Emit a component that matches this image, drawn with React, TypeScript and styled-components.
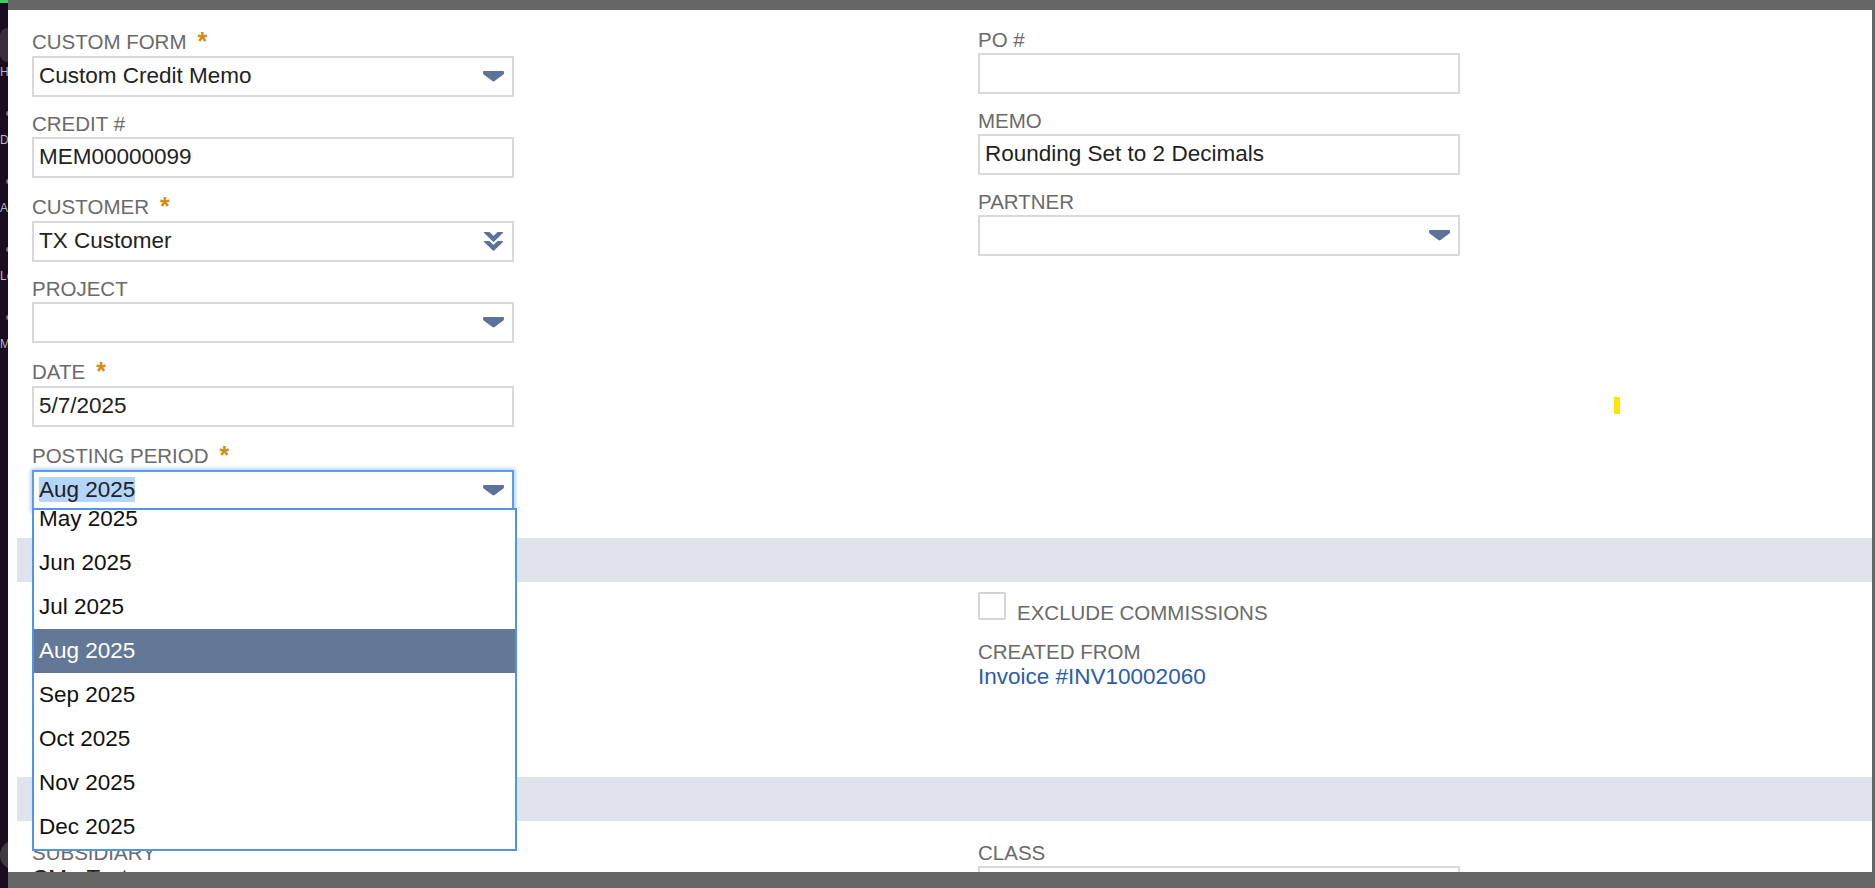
import React, { useLayoutEffect, useRef } from "react";
import styled, { createGlobalStyle } from "styled-components";

const GlobalStyle = createGlobalStyle`
  *, *::before, *::after { box-sizing: border-box; }
  html, body { margin: 0; padding: 0; }
  body {
    width: 1875px;
    height: 888px;
    overflow: hidden;
    background: #666;
    font-family: "Liberation Sans", Arial, Helvetica, sans-serif;
  }
`;

const Screen = styled.div`
  display: flex;
  width: 1875px;
  height: 888px;
`;

/* ---- app navigation rail, mostly covered by the record window ---- */
const Rail = styled.nav`
  width: 8px;
  flex: none;
  display: flex;
  flex-direction: column;
  overflow: hidden;
  background: #1c0c1f;
`;

const RailAccent = styled.div`
  height: 3px;
  flex: none;
  background: #3fcf5c;
`;

const RailList = styled.div`
  width: 8px;
  display: flex;
  flex-direction: column;
  padding-top: 25px;
`;

const RailItem = styled.div`
  height: 68px;
  display: flex;
  flex-direction: column;
`;

const RailIcon = styled.div<{ $active?: boolean }>`
  width: 34px;
  height: 34px;
  border-radius: 8px;
  display: flex;
  align-items: center;
  padding-left: 6px;
  background: ${(p) => (p.$active ? "#3a2d3d" : "transparent")};
`;

const RailDot = styled.span`
  width: 5px;
  height: 5px;
  border-radius: 50%;
  background: #7a737b;
`;

const RailText = styled.span`
  margin-top: 3px;
  width: 8px;
  overflow: hidden;
  font-size: 12px;
  line-height: 14px;
  color: #bdb6be;
  white-space: nowrap;
`;

const RailAvatar = styled.div`
  margin-top: auto;
  margin-bottom: 18px;
  width: 30px;
  height: 30px;
  flex: none;
  border-radius: 50%;
  background: #3f3a40;
`;

/* ---- record window ---- */
const Frame = styled.div`
  flex: 1;
  min-width: 0;
  display: flex;
  flex-direction: column;
  padding: 10px 3px 16px 0;
  background: #666;
`;

const Panel = styled.main`
  position: relative;
  flex: 1;
  display: flex;
  flex-direction: column;
  overflow: hidden;
  padding-left: 9px;
  background: #fff;
`;

const Section = styled.section<{ $pt: number; $pb?: number; $minH?: number }>`
  flex: none;
  display: grid;
  grid-template-columns: 946px 482px;
  align-items: start;
  padding: ${(p) => p.$pt}px 0 ${(p) => p.$pb ?? 0}px 15px;
  min-height: ${(p) => (p.$minH ? `${p.$minH}px` : "0")};
`;

const Band = styled.div`
  height: 44px;
  flex: none;
  background: #dfe4ec;
`;

const Column = styled.div`
  width: 482px;
  display: flex;
  flex-direction: column;
  gap: 15px;
`;

const Field = styled.div`
  display: flex;
  flex-direction: column;
`;

const Label = styled.div<{ $req?: boolean }>`
  display: flex;
  align-items: flex-start;
  padding-top: ${(p) => (p.$req ? 2 : 0)}px;
  margin-bottom: ${(p) => (p.$req ? 2 : 1)}px;
  font-size: 20.5px;
  line-height: 24px;
  color: #6a6a6a;
  white-space: nowrap;
`;

const Req = styled.span`
  margin-left: 11px;
  font-size: 25px;
  line-height: 22px;
  font-weight: bold;
  color: #d68a10;
`;

const InputWrap = styled.div`
  position: relative;
`;

const InputBox = styled.div<{ $focused?: boolean }>`
  height: 41px;
  display: flex;
  align-items: center;
  padding: 0 8px 1px 5px;
  background: #fff;
  border: 2px solid ${(p) => (p.$focused ? "#5c9cf0" : "#d9d9d9")};
  box-shadow: ${(p) => (p.$focused ? "0 0 4px 1px rgba(84, 150, 240, 0.55)" : "none")};
  font-size: 22.5px;
  color: #222;
`;

const Value = styled.span`
  flex: 1;
  min-width: 0;
  overflow: hidden;
  white-space: nowrap;
`;

const Highlight = styled.span`
  background: #b4d5fd;
`;

const ListBox = styled.ul`
  position: absolute;
  left: 0;
  top: 38px;
  z-index: 5;
  width: 485px;
  height: 343px;
  margin: 0;
  padding: 0;
  list-style: none;
  overflow: hidden;
  background: #fff;
  border: 2px solid #4f95ee;
`;

const Option = styled.li<{ $selected?: boolean }>`
  height: 44px;
  display: flex;
  align-items: center;
  padding-left: 5px;
  font-size: 22.5px;
  white-space: nowrap;
  color: ${(p) => (p.$selected ? "#fff" : "#111")};
  background: ${(p) => (p.$selected ? "#627896" : "transparent")};
`;

const CheckRow = styled.div`
  display: flex;
  align-items: baseline;
  gap: 11px;
`;

const CheckBox = styled.span`
  width: 28px;
  height: 28px;
  flex: none;
  border: 2px solid #d4d4d4;
  border-radius: 2px;
  background: #fff;
`;

const CheckText = styled.span`
  font-size: 20.5px;
  line-height: 24px;
  color: #6a6a6a;
  white-space: nowrap;
`;

const RecordLink = styled.a`
  font-size: 22.5px;
  line-height: 24px;
  color: #2b5ca7;
  text-decoration: none;
  white-space: nowrap;
`;

const PlainValue = styled.div`
  font-size: 22.5px;
  line-height: 24px;
  color: #222;
  white-space: nowrap;
`;

const CaretMark = styled.span`
  position: absolute;
  left: 1606px;
  top: 387px;
  width: 6px;
  height: 17px;
  background: #ffe500;
`;

/* ---- icons ---- */
const SelectCaret = () => (
  <svg width="21" height="11" viewBox="0 0 21 11" aria-hidden="true">
    <path
      d="M0 0.6 Q0 0 1 0 H20 Q21 0 21 0.6 V2 Q21 2.8 20.3 3.4 L11.6 10 Q10.5 10.8 9.4 10 L0.7 3.4 Q0 2.8 0 2 Z"
      fill="#5b739a"
    />
  </svg>
);

const PopupCaret = () => (
  <svg width="21" height="21" viewBox="0 0 21 21" aria-hidden="true">
    <g fill="#5b739a" stroke="#5b739a" strokeWidth="1.2" strokeLinejoin="round">
      <path d="M1.5 1.5 H6 L10.5 5.8 L15 1.5 H19.5 L10.5 10.2 Z" />
      <path d="M1.5 10.5 H6 L10.5 14.8 L15 10.5 H19.5 L10.5 19.2 Z" />
    </g>
  </svg>
);

/* ---- data ---- */
const railItems = [
  { label: "Home", active: true },
  { label: "Dashboard" },
  { label: "Activities" },
  { label: "Leads" },
  { label: "Marketing" },
];

const periods = [
  "May 2025",
  "Jun 2025",
  "Jul 2025",
  "Aug 2025",
  "Sep 2025",
  "Oct 2025",
  "Nov 2025",
  "Dec 2025",
];

type Kind = "select" | "popup" | "text";

function FormField({
  label,
  value,
  req,
  kind = "text",
}: {
  label: string;
  value?: string;
  req?: boolean;
  kind?: Kind;
}) {
  return (
    <Field>
      <Label $req={req}>
        {label}
        {req && <Req>*</Req>}
      </Label>
      <InputBox>
        <Value>{value}</Value>
        {kind === "select" && <SelectCaret />}
        {kind === "popup" && <PopupCaret />}
      </InputBox>
    </Field>
  );
}

function PeriodField() {
  const listRef = useRef<HTMLUListElement>(null);
  const selected = "Aug 2025";

  useLayoutEffect(() => {
    const el = listRef.current;
    if (el) el.scrollTop = el.scrollHeight;
  }, []);

  return (
    <Field>
      <Label $req>
        POSTING PERIOD
        <Req>*</Req>
      </Label>
      <InputWrap>
        <InputBox $focused>
          <Value>
            <Highlight>{selected}</Highlight>
          </Value>
          <SelectCaret />
        </InputBox>
        <ListBox ref={listRef}>
          {periods.map((p) => (
            <Option key={p} $selected={p === selected}>
              {p}
            </Option>
          ))}
        </ListBox>
      </InputWrap>
    </Field>
  );
}

export default function App() {
  return (
    <>
      <GlobalStyle />
      <Screen>
        <Rail>
          <RailAccent />
          <RailList>
            {railItems.map((item) => (
              <RailItem key={item.label}>
                <RailIcon $active={item.active}>{!item.active && <RailDot />}</RailIcon>
                <RailText>{item.label}</RailText>
              </RailItem>
            ))}
          </RailList>
          <RailAvatar />
        </Rail>

        <Frame>
          <Panel>
            <Section $pt={18} $pb={27}>
              <Column>
                <FormField label="CUSTOM FORM" req kind="select" value="Custom Credit Memo" />
                <FormField label="CREDIT #" value="MEM00000099" />
                <FormField label="CUSTOMER" req kind="popup" value="TX Customer" />
                <FormField label="PROJECT" kind="select" />
                <FormField label="DATE" req value="5/7/2025" />
                <PeriodField />
              </Column>
              <Column>
                <FormField label="PO #" />
                <FormField label="MEMO" value="Rounding Set to 2 Decimals" />
                <FormField label="PARTNER" kind="select" />
              </Column>
            </Section>

            <Band />

            <Section $pt={10} $minH={195}>
              <Column />
              <Column>
                <CheckRow>
                  <CheckBox />
                  <CheckText>EXCLUDE COMMISSIONS</CheckText>
                </CheckRow>
                <Field>
                  <Label>CREATED FROM</Label>
                  <RecordLink href="#">Invoice #INV10002060</RecordLink>
                </Field>
              </Column>
            </Section>

            <Band />

            <Section $pt={20}>
              <Column>
                <Field>
                  <Label>SUBSIDIARY</Label>
                  <PlainValue>CM - Test</PlainValue>
                </Field>
              </Column>
              <Column>
                <FormField label="CLASS" kind="select" />
              </Column>
            </Section>

            <CaretMark />
          </Panel>
        </Frame>
      </Screen>
    </>
  );
}
